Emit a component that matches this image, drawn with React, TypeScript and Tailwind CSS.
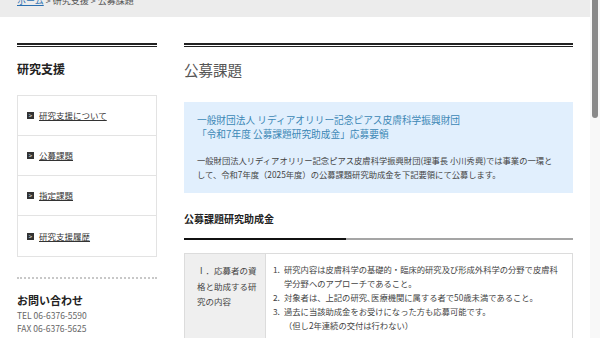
import React from "react";

const jp = { fontFamily: '"Noto Sans CJK JP", "Noto Sans", sans-serif' };

function DoubleLine() {
  return <div className="h-[4px] border-t-2 border-b border-[#222]" />;
}

function MenuItem({ label, last }: { label: string; last?: boolean }) {
  return (
    <div className={`h-[40px] flex items-center pl-[9px] ${last ? "" : "border-b border-[#e3e3e3]"}`}>
      <span className="w-[7px] h-[7px] bg-[#333] text-white text-[6px] leading-[7px] flex items-center justify-center mr-[5px]">&gt;</span>
      <span className="text-[8.5px] text-[#333] underline">{label}</span>
    </div>
  );
}

export default function App() {
  return (
    <div className="w-[600px] h-[338px] overflow-hidden flex bg-white" style={jp}>
      <div className="w-[590px] flex flex-col">
        <div className="h-[17px] shrink-0 bg-[#ececec] overflow-hidden px-[17px]">
          <div className="-mt-[5px] text-[9px] leading-[12px] text-[#555] whitespace-nowrap">
            <span className="text-[#2a6fb0] underline">ホーム</span> &gt; 研究支援 &gt; 公募課題
          </div>
        </div>
        <div className="flex shrink-0 pl-[17px] pt-[26px] gap-[27px]">
          {/* left column */}
          <div className="w-[140px] flex flex-col">
            <DoubleLine />
            <div className="mt-[14px] text-[12px] leading-[16px] font-bold text-[#222]">研究支援</div>
            <div className="mt-[18px] border border-[#e3e3e3]">
              <MenuItem label="研究支援について" />
              <MenuItem label="公募課題" />
              <MenuItem label="指定課題" />
              <MenuItem label="研究支援履歴" last />
            </div>
            <div className="mt-[20px] border-t-2 border-dotted border-[#c8c8c8]" />
            <div className="mt-[14px] text-[11px] leading-[14px] font-bold text-[#222]">お問い合わせ</div>
            <div className="mt-[2px] text-[8.5px] leading-[13px] text-[#666]">
              <div>TEL 06-6376-5590</div>
              <div>FAX 06-6376-5625</div>
            </div>
          </div>
          {/* main column */}
          <div className="w-[389px] flex flex-col">
            <DoubleLine />
            <div className="mt-[13px] text-[14.5px] leading-[20px] text-[#555]">公募課題</div>
            <div className="mt-[22px] bg-[#e1effd] px-[13px] pt-[11px] pb-[12px]">
              <div className="text-[9.7px] leading-[14px] text-[#3b87b5] whitespace-nowrap">
                一般財団法人 リディアオリリー記念ピアス皮膚科学振興財団
                <br />
                「令和7年度 公募課題研究助成金」応募要領
              </div>
              <div className="mt-[12px] text-[8.3px] leading-[14px] text-[#444] whitespace-nowrap">
                一般財団法人リディアオリリー記念ピアス皮膚科学振興財団(理事長 小川秀興)では事業の一環と
                <br />
                して、令和7年度（2025年度）の公募課題研究助成金を下記要領にて公募します。
              </div>
            </div>
            <div className="mt-[19px] text-[10px] leading-[14px] font-bold text-[#222]">公募課題研究助成金</div>
            <div className="mt-[12px] flex">
              <div className="w-[162px] h-[2px] bg-[#111]" />
              <div className="flex-1 h-[2px] bg-[#a5a5a5]" />
            </div>
            <div className="mt-[13px] border border-[#dcdcdc] flex">
              <div className="w-[81px] bg-[#efefef] border-r border-[#dcdcdc] pl-[12px] pr-[8px] pt-[9px] pb-[8px] text-[8.5px] leading-[15.5px] text-[#444]">
                Ⅰ．応募者の資格と助成する研究の内容
              </div>
              <div className="flex-1 pl-[7px] pt-[8px] pb-[10px] text-[8.3px] leading-[14px] text-[#444] whitespace-nowrap">
                <div className="flex">
                  <span className="w-[11px]">1.</span>
                  <span>
                    研究内容は皮膚科学の基礎的・臨床的研究及び形成外科学の分野で皮膚科
                    <br />
                    学分野へのアプローチであること。
                  </span>
                </div>
                <div className="flex">
                  <span className="w-[11px]">2.</span>
                  <span>対象者は、上記の研究､医療機関に属する者で50歳未満であること。</span>
                </div>
                <div className="flex">
                  <span className="w-[11px]">3.</span>
                  <span>
                    過去に当該助成金をお受けになった方も応募可能です。
                    <br />
                    （但し2年連続の交付は行わない）
                  </span>
                </div>
              </div>
            </div>
            <div className="border-x border-[#dcdcdc] flex h-[20px]">
              <div className="w-[81px] bg-[#efefef] border-r border-[#dcdcdc]" />
            </div>
          </div>
        </div>
      </div>
      <div className="w-[10px] bg-[#f8f8f8] relative">
        <div className="absolute left-[2px] top-0 w-[6px] h-[118px] bg-[#8a8a8a] rounded-b-[3px]" />
      </div>
    </div>
  );
}
